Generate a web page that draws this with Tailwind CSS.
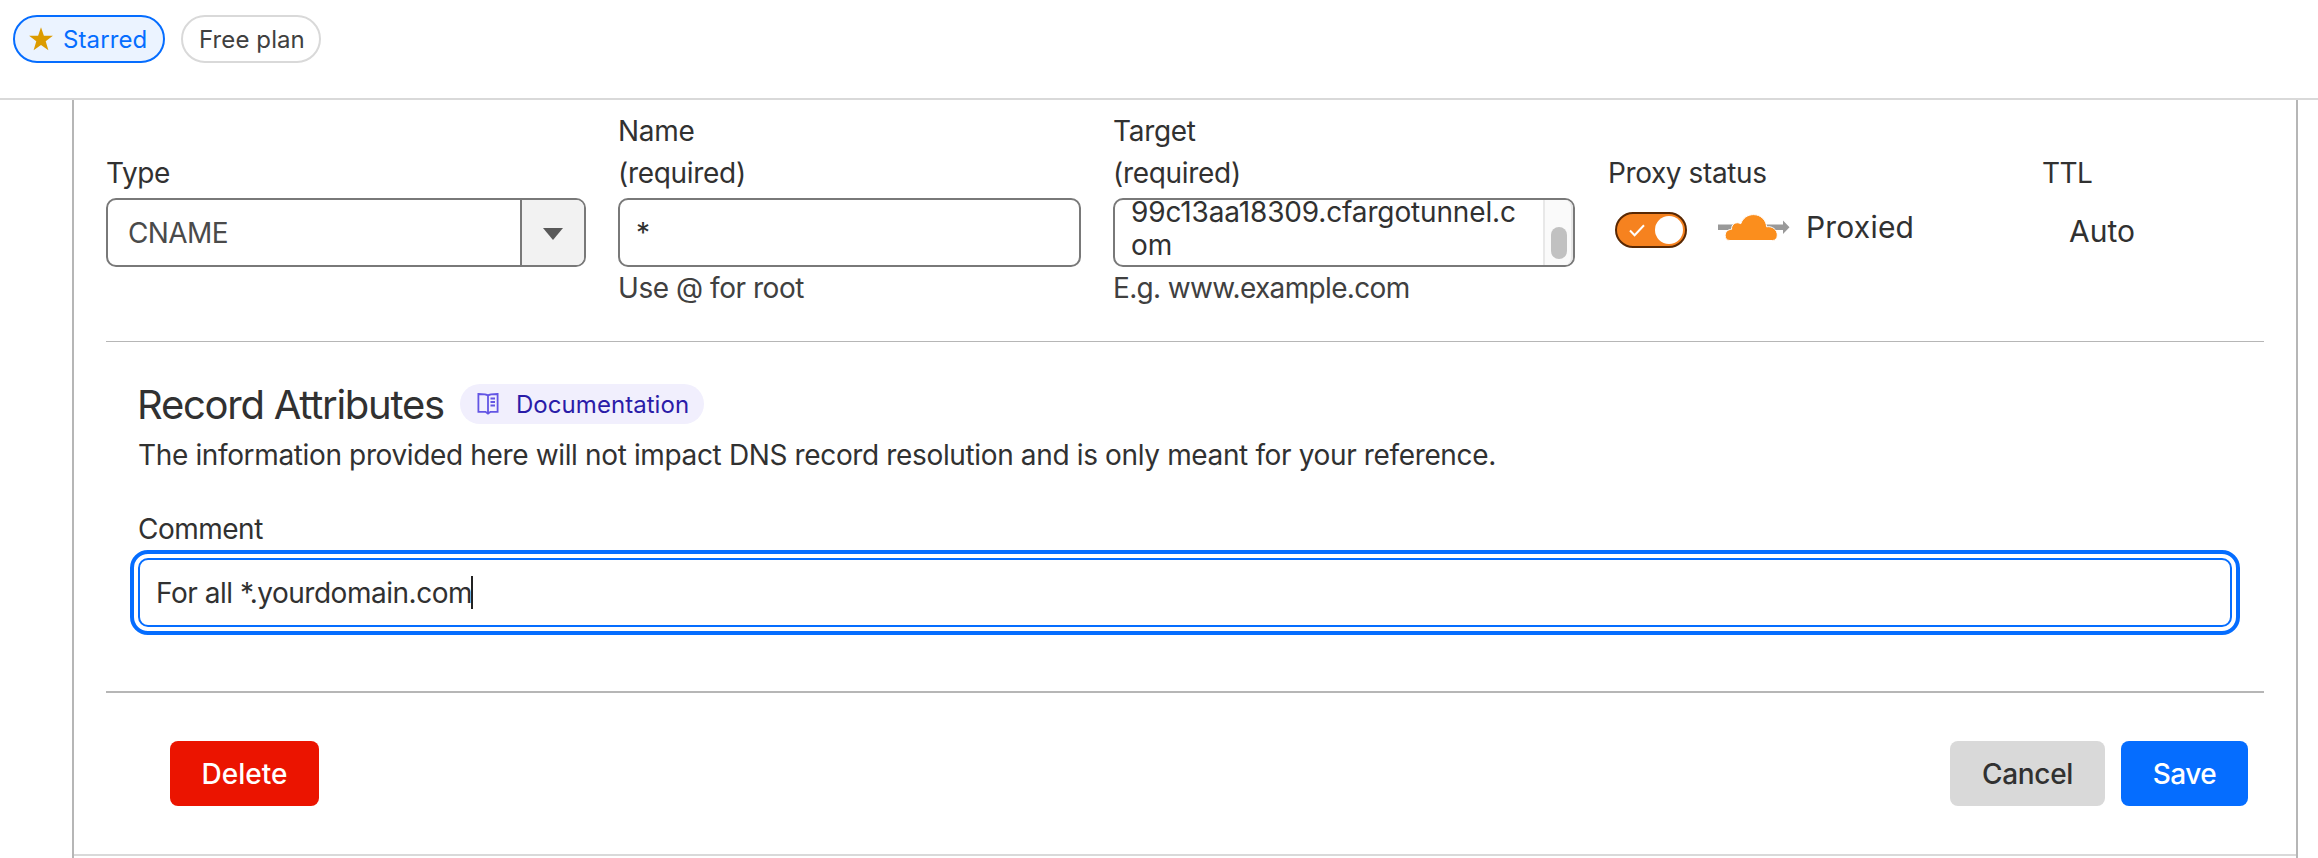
<!DOCTYPE html>
<html lang="en">
<head>
<meta charset="utf-8">
<title>DNS record</title>
<script src="https://cdn.jsdelivr.net/npm/@tailwindcss/browser@4"></script>
</head>
<body class="flex h-[858px] w-[2318px] flex-col overflow-hidden bg-white font-[Inter,sans-serif] text-[28px] leading-[42px] text-[#313131]">
  <header class="flex h-[100px] shrink-0 items-start gap-4 border-b-2 border-[#d9d9d9] pt-[15px] pl-[13px]">
    <span class="flex h-12 w-[152px] items-center gap-[10px] rounded-full border-2 border-[#056dff] bg-[#ebf3ff] pl-[14px] text-2xl tracking-[0.1px] text-[#056dff]">
      <svg class="h-6 w-6 shrink-0" viewBox="0 0 24 24" fill="#dc9b00"><path d="M12 0.3l2.9 8.5H23.9l-7.2 5.5 2.7 9-7.4-5.3-7.4 5.3 2.7-9L0.1 8.8H9.1z"/></svg>
      <span class="pt-0.5">Starred</span>
    </span>
    <span class="flex h-12 w-[140px] items-center rounded-full border-2 border-[#d9d9d9] pt-0.5 pl-[16px] text-2xl tracking-[0.1px] whitespace-nowrap text-[#404040]">Free plan</span>
  </header>

  <main class="mr-[20px] ml-[72px] h-[758px] border-x-2 border-[#b6b6b6]">
    <section class="mx-8 flex h-[242px] items-start border-b border-[#b6b6b6] pt-[10px]">
      <div class="mr-8 w-[480px] pt-[42px]">
        <div class="tracking-[-0.4px]">Type</div>
        <div class="mt-1 flex h-[69px] overflow-hidden rounded-[10px] border-2 border-[#797979]">
          <div class="flex flex-1 items-center pt-px pl-5 tracking-[-0.6px] text-[#4a4a4a]">CNAME</div>
          <div class="flex w-[64px] items-center justify-center border-l-2 border-[#797979] bg-[#f2f2f2]">
            <svg class="mt-[3px] h-3 w-5" viewBox="0 0 20 12" fill="#595959"><path d="M0 0h20L10 12z"/></svg>
          </div>
        </div>
      </div>

      <div class="mr-8 w-[463px]">
        <div class="tracking-[-0.3px]">Name<br>(required)</div>
        <div class="mt-1 flex h-[69px] items-center rounded-[10px] border-2 border-[#797979] pl-4">*</div>
        <div class="tracking-[-0.45px] text-[#404040]">Use @ for root</div>
      </div>

      <div class="mr-[33px] w-[462px]">
        <div class="tracking-[-0.3px]">Target<br>(required)</div>
        <div class="mt-1 flex h-[69px] rounded-[10px] border-2 border-[#797979]">
          <div class="-mt-1 flex-1 pl-4 leading-[33px] tracking-[-0.15px]">99c13aa18309.cfargotunnel.c<br>om</div>
          <div class="flex w-[30px] items-end rounded-r-lg border-r-2 border-l-2 border-[#e8e8e8] bg-[#fafafa] pb-[6px] pl-[6px]">
            <div class="h-8 w-4 rounded-full bg-[#c1c1c1]"></div>
          </div>
        </div>
        <div class="tracking-[-0.65px] text-[#404040]">E.g. www.example.com</div>
      </div>

      <div class="w-[435px] pt-[42px]">
        <div class="tracking-[-0.4px]">Proxy status</div>
        <div class="mt-[12px] flex items-center pl-[7px]">
          <div class="mt-[6px] flex h-9 w-[72px] items-center justify-between rounded-full border-2 border-[#592803] bg-[#f6821f] pr-[2px] pl-3">
            <svg class="h-[13px] w-4" viewBox="0 0 16 13" fill="none" stroke="#fff" stroke-width="2"><path d="M1 6.5l4.6 4.7L15 1.3"/></svg>
            <div class="h-7 w-7 rounded-full bg-white"></div>
          </div>
          <svg class="ml-[31px] h-[27px] w-[72px]" viewBox="0 0 72 27">
            <path d="M0 10.5h65V6.5L71.5 13.3 65 20V16H0z" fill="#999"/>
            <path d="M12 26.5C8.500 26.500 7.200 24.500 7.200 21.500C7.200 17.500 10 15.500 13.600 15.300C13 10.500 18 7 22.800 9.700C24.500 4.500 29.500 0.600 35.500 0.600C43 0.600 48.300 6.500 48.600 12.800C54.500 11.800 59.300 16 59.300 21C59.300 24.500 57.500 26.500 54.500 26.500Z" fill="#fb8e1d" stroke="#fff" stroke-width="1"/>
          </svg>
          <span class="ml-4 text-[30px] tracking-[0.2px]">Proxied</span>
        </div>
      </div>

      <div class="pt-[42px]">
        <div class="-ml-px tracking-[-0.6px]">TTL</div>
        <div class="mt-4 pl-[26px] text-[30px]">Auto</div>
      </div>
    </section>

    <section class="mx-8 flex h-[351px] flex-col border-b-2 border-[#b6b6b6] px-8 pt-[42px]">
      <div class="flex h-10 items-center gap-[15px]">
        <h2 class="-ml-px w-[308px] pt-0.5 text-[40px] tracking-[-1.25px] whitespace-nowrap">Record Attributes</h2>
        <a class="flex h-10 w-[244px] items-center rounded-full bg-[#f1effd] pl-[17px] text-2xl tracking-[0.05px] text-[#2a1ca8]">
          <svg class="mr-[17px] h-[22px] w-[22px]" viewBox="0 0 22 22" fill="none" stroke="#6355e4" stroke-width="1.800"><path d="M11 2.500C9.500 1 7.500 1 1.400 1V18.800H8.500L11 20.600L13.500 18.800H20.600V1C14.500 1 12.500 1 11 2.500V20"/><path d="M13.500 5.500H18M13.500 9H18M13.500 12.500H18"/></svg>
          <span class="pt-0.5">Documentation</span>
        </a>
      </div>
      <p class="mt-[10px] tracking-[-0.36px] whitespace-nowrap">The information provided here will not impact DNS record resolution and is only meant for your reference.</p>
      <label class="mt-[32px] tracking-[-0.5px]">Comment</label>
      <div class="mt-2 flex h-[69px] items-center rounded-[10px] border-2 border-[#056dff] pl-4 outline-4 outline-offset-4 outline-[#056dff]">
        <span class="w-[315px] pt-px tracking-[-0.48px] whitespace-nowrap">For all *.yourdomain.com</span>
        <span class="h-[33px] w-[2px] bg-[#222]"></span>
      </div>
    </section>

    <footer class="flex h-[163px] items-center justify-between border-b-2 border-[#d9d9d9] pr-12 pl-24 font-medium">
      <button class="h-[65px] w-[149px] rounded-lg bg-[#eb1400] pt-px text-white">Delete</button>
      <div class="flex gap-4">
        <button class="h-[65px] w-[155px] rounded-lg bg-[#d9d9d9] pt-px tracking-[-0.3px]">Cancel</button>
        <button class="h-[65px] w-[127px] rounded-lg bg-[#056dff] pt-px tracking-[-0.5px] text-white">Save</button>
      </div>
    </footer>
  </main>
</body>
</html>
